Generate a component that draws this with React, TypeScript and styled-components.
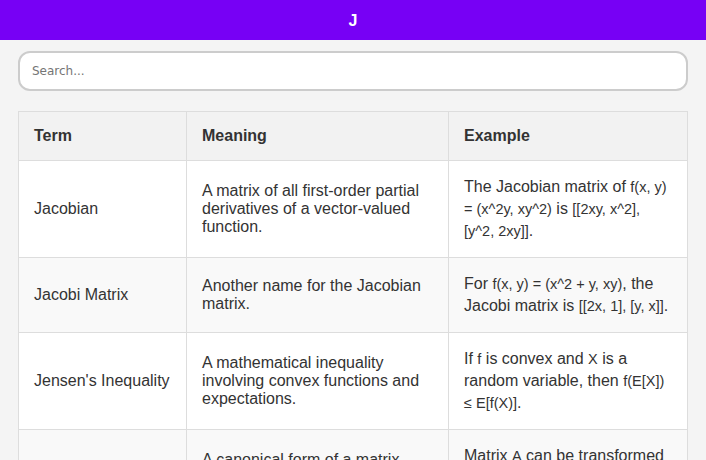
import React from "react";
import styled, { createGlobalStyle } from "styled-components";

const GlobalStyle = createGlobalStyle`
  * {
    box-sizing: border-box;
  }
  body {
    margin: 0;
    background: #f4f4f4;
    color: #333;
    font-family: "Liberation Sans", Arial, sans-serif;
    font-size: 16px;
  }
`;

type Entry = {
  term: string;
  meaning: string;
  example: React.ReactNode;
};

const entries: Entry[] = [
  {
    term: "Jacobian",
    meaning:
      "A matrix of all first-order partial derivatives of a vector-valued function.",
    example: (
      <>
        The Jacobian matrix of <M>f(x, y) = (x^2y, xy^2)</M> is{" "}
        <M>[[2xy, x^2], [y^2, 2xy]]</M>.
      </>
    ),
  },
  {
    term: "Jacobi Matrix",
    meaning: "Another name for the Jacobian matrix.",
    example: (
      <>
        For <M>f(x, y) = (x^2 + y, xy)</M>, the Jacobi matrix is{" "}
        <M>[[2x, 1], [y, x]]</M>.
      </>
    ),
  },
  {
    term: "Jensen's Inequality",
    meaning:
      "A mathematical inequality involving convex functions and expectations.",
    example: (
      <>
        If <M>f</M> is convex and <M>X</M> is a random variable, then{" "}
        <M>f(E[X]) ≤ E[f(X)]</M>.
      </>
    ),
  },
  {
    term: "Jordan Normal Form",
    meaning:
      "A canonical form of a matrix representing a linear map over an algebraically closed field.",
    example: (
      <>
        Matrix <M>A</M> can be transformed into its Jordan form{" "}
        <M>J = P^-1AP</M>.
      </>
    ),
  },
];

// inline maths, set a little smaller and with a taller line box
function M({ children }: { children: React.ReactNode }) {
  return <MathText>{children}</MathText>;
}

export default function App() {
  return (
    <>
      <GlobalStyle />
      <Header>
        <Title>J</Title>
      </Header>
      <Main>
        <Search type="text" placeholder="Search..." />
        <Table>
          <colgroup>
            <col style={{ width: 168 }} />
            <col style={{ width: 262 }} />
            <col style={{ width: 239 }} />
          </colgroup>
          <thead>
            <tr>
              <Th>Term</Th>
              <Th>Meaning</Th>
              <Th>Example</Th>
            </tr>
          </thead>
          <tbody>
            {entries.map((e) => (
              <Row key={e.term}>
                <Td>{e.term}</Td>
                <Td>{e.meaning}</Td>
                <Td>{e.example}</Td>
              </Row>
            ))}
          </tbody>
        </Table>
      </Main>
    </>
  );
}

const Header = styled.header`
  height: 40px;
  background: #7700f5;
  display: flex;
  align-items: center;
  justify-content: center;
`;

const Title = styled.h1`
  margin: 0;
  padding-top: 1px;
  color: #fff;
  font-size: 16px;
  font-weight: 700;
`;

const Main = styled.main`
  padding: 11px 18px 20px;
`;

const Search = styled.input`
  display: block;
  width: 100%;
  height: 40px;
  padding: 0 12px;
  margin-bottom: 20px;
  border: 2px solid #ccc;
  border-radius: 12px;
  background: #fff;
  font-family: "DejaVu Sans", sans-serif;
  font-size: 12px;
  color: #333;
  outline: none;

  &::placeholder {
    color: #757575;
  }
`;

const Table = styled.table`
  width: 100%;
  table-layout: fixed;
  border-collapse: collapse;
  background: #fff;
  border-radius: 8px;
`;

const Th = styled.th`
  padding: 15px;
  border: 1px solid #ddd;
  background: #f2f2f2;
  text-align: left;
  font-weight: 700;
`;

const Row = styled.tr`
  &:nth-child(even) {
    background: #f9f9f9;
  }
`;

const Td = styled.td`
  padding: 15px;
  border: 1px solid #ddd;
  text-align: left;
  vertical-align: middle;
`;

const MathText = styled.span`
  font-family: "Liberation Sans", Arial, sans-serif;
  font-size: 14.5px;
  line-height: 22px;
  color: #333;
`;
